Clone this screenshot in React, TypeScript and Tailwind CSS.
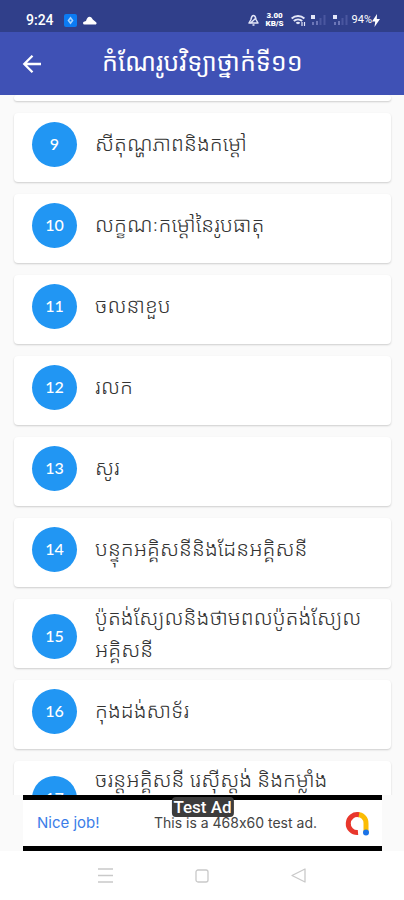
import { ReactNode } from "react";

interface Lesson {
  id: number;
  title: string;
  tall?: boolean;
}

const LESSONS: Lesson[] = [
  { id: 9, title: "សីតុណ្ហភាពនិងកម្ដៅ" },
  { id: 10, title: "លក្ខណៈកម្ដៅនៃរូបធាតុ" },
  { id: 11, title: "ចលនាខួប" },
  { id: 12, title: "រលក" },
  { id: 13, title: "សូរ" },
  { id: 14, title: "បន្ទុកអគ្គិសនីនិងដែនអគ្គិសនី" },
  { id: 15, title: "ប៉ូតង់ស្យែលនិងថាមពលប៉ូតង់ស្យែល អគ្គិសនី", tall: true },
  { id: 16, title: "កុងដង់សាទ័រ" },
  { id: 17, title: "ចរន្តអគ្គិសនី រេស៊ីស្តង់ និងកម្លាំង", tall: true },
];

function SignalIcon() {
  return (
    <svg width="16" height="12" viewBox="0 0 16 12" aria-hidden="true">
      <path d="M1 1h4v4H1z" fill="#e3e6f8" />
      <path d="M2 8h2v3H2zM6 7h2v4H6z" fill="#6d77b8" />
      <path d="M9.500 4h2v7h-2zM13.500 1h2v10h-2z" fill="#4a579f" />
    </svg>
  );
}

function StatusBar() {
  return (
    <div className="flex h-8 shrink-0 items-center justify-between bg-[#303f8a] pt-2 pr-6 pl-[26px] text-white">
      <div className="flex items-center">
        <span className="w-[38px] text-sm font-medium">9:24</span>
        <svg width="13" height="13" viewBox="0 0 13 13" aria-hidden="true">
          <rect width="13" height="13" rx="2" fill="#0b7bf4" />
          <path d="M6.500 2.500l3 4-3 4-3-4z" fill="#a9d4ff" />
          <circle cx="6.500" cy="6.500" r="1" fill="#0b7bf4" />
        </svg>
        <svg className="ml-1.5" width="14" height="9" viewBox="0 0 14 9" aria-hidden="true">
          <path d="M1.500 8.500a1.500 1.500 0 0 1 0-3l1.500-.5C4 2 5 .8 6.500.8S9 2 9.800 3.500l3 2.500a1.400 1.400 0 0 1 0 2.500z" fill="#fff" />
        </svg>
      </div>
      <div className="flex items-center">
        <svg width="11" height="12" viewBox="0 0 11 12" fill="none" stroke="#e3e6f8" strokeWidth="1.500" strokeLinejoin="round" aria-hidden="true">
          <path d="M5.500 1.500C3.500 1.500 3.300 4 3 5.500L1 9h9L8 5.500C7.700 4 7.500 1.500 5.500 1.500zM4.500 11h2M2 9.500L8 4" />
        </svg>
        <span className="ml-1.5 flex w-5 flex-col text-center text-[8px] leading-[8px] font-black whitespace-nowrap">
          <span>3.00</span>
          <span>KB/S</span>
        </span>
        <svg className="ml-1.5" width="15" height="12" viewBox="0 0 15 12" fill="none" stroke="#e3e6f8" strokeWidth="2" aria-hidden="true">
          <path d="M.6 4.500a9.500 9.500 0 0 1 12.800 0M2.800 7a6.300 6.300 0 0 1 8.400 0M5.500 9.500a2 2 0 0 1 3 0" />
          <path d="M11 8v4M13.500 8v4" strokeWidth="1.200" />
        </svg>
        <span className="ml-1 flex gap-1.5">
          <SignalIcon />
          <SignalIcon />
        </span>
        <span className="ml-1 text-[11px]">94%</span>
        <svg width="8" height="13" viewBox="0 0 8 13" aria-hidden="true">
          <path d="M5 0L0 7.500h3.200L2.500 13 8 5H4.800z" fill="#fff" />
        </svg>
      </div>
    </div>
  );
}

function AppBar() {
  return (
    <header className="flex h-[63px] shrink-0 items-center bg-[#3f51b5] pl-[22px] text-white">
      <button type="button" aria-label="Back">
        <svg width="20" height="20" viewBox="0 0 20 20" fill="none" stroke="#fff" strokeWidth="2.300" aria-hidden="true">
          <path d="M19 10H2.500M10.500 1.800L2.300 10l8.200 8.200" />
        </svg>
      </button>
      <h1 className="ml-[60px] pb-0.5 text-[25px] whitespace-nowrap">កំណែរូបវិទ្យាថ្នាក់ទី១១</h1>
    </header>
  );
}

function Card({ children }: { children?: ReactNode }) {
  return <li className="rounded bg-white shadow-[0_1px_2px_rgba(0,0,0,0.18)]">{children}</li>;
}

function LessonCard({ lesson }: { lesson: Lesson }) {
  return (
    <Card>
      <a
        href={`#lesson-${lesson.id}`}
        className={`flex h-[69px] items-start pl-[18px] ${lesson.tall ? "pt-[3px]" : "pt-[9px]"}`}
      >
        <span
          className={`flex size-[45px] shrink-0 items-center justify-center rounded-full bg-[#2196f3] pb-0.5 font-[Lato] text-base font-medium text-white ${
            lesson.tall ? "mt-3" : ""
          }`}
        >
          {lesson.id}
        </span>
        <span className={`ml-[18px] text-[21px] leading-8 font-light text-[#333] ${lesson.tall ? "" : "pt-1.5"}`}>
          {lesson.title}
        </span>
      </a>
    </Card>
  );
}

function AdBanner() {
  return (
    <aside className="shrink-0 bg-[#fafafa] pr-[22px] pl-[23px]">
      <div className="relative flex h-14 items-center border-y-[5px] border-black bg-white pr-3 pl-3.5 font-[Inter,sans-serif] text-sm [font-feature-settings:'calt'_0]">
        <a href="#ad" className="shrink-0 text-[15px] text-[#3b7de8]">
          Nice job!
        </a>
        <span className="ml-auto leading-4 whitespace-nowrap text-[#444]">This is a 468x60 test ad.</span>
        <svg className="ml-7 shrink-0" width="25" height="25" viewBox="0 0 25 25" fill="none" aria-hidden="true">
          <path d="M12 3.500a8.500 8.500 0 0 1 9 9V21" stroke="#fbbc04" strokeWidth="5" />
          <path d="M14 3.700a9 9 0 1 0-1 17.800" stroke="#e8372c" strokeWidth="5" />
          <circle cx="21" cy="21.500" r="3" fill="#1a73e8" />
        </svg>
        <span className="absolute -top-[3px] left-1/2 -translate-x-1/2 rounded bg-[#3c3c3c] px-0.5 font-[Roboto] text-[17px] leading-5 font-medium whitespace-nowrap text-white">
          Test Ad
        </span>
      </div>
    </aside>
  );
}

function NavigationBar() {
  return (
    <nav className="flex h-[49px] shrink-0 items-center justify-center gap-[82px] bg-white">
      <button type="button" aria-label="Recent apps">
        <svg width="15" height="15" viewBox="0 0 15 15" stroke="#c9c9c9" strokeWidth="1.500" aria-hidden="true">
          <path d="M0 1h15M0 7.500h15M0 14h15" />
        </svg>
      </button>
      <button type="button" aria-label="Home">
        <svg width="14" height="14" viewBox="0 0 14 14" fill="none" stroke="#c9c9c9" strokeWidth="1.300" aria-hidden="true">
          <rect x="1" y="1" width="12" height="12" rx="2" />
        </svg>
      </button>
      <button type="button" aria-label="Back">
        <svg width="15" height="15" viewBox="0 0 15 15" fill="none" stroke="#c9c9c9" strokeWidth="1.300" strokeLinejoin="round" aria-hidden="true">
          <path d="M14 1v13L1 7.500z" />
        </svg>
      </button>
    </nav>
  );
}

export default function App() {
  return (
    <div className="flex h-screen flex-col overflow-hidden bg-[#fafafa] font-['Roboto','Noto_Sans_Khmer','Noto_Sans',sans-serif]">
      <StatusBar />
      <AppBar />
      <main className="min-h-0 flex-1 overflow-hidden">
        <ul className="flex flex-col gap-3 pr-[13px] pl-3.5">
          {/* tail of the card scrolled under the app bar */}
          <Card>
            <div className="h-1.5" />
          </Card>
          {LESSONS.map((lesson) => (
            <LessonCard key={lesson.id} lesson={lesson} />
          ))}
        </ul>
      </main>
      <AdBanner />
      <NavigationBar />
    </div>
  );
}
